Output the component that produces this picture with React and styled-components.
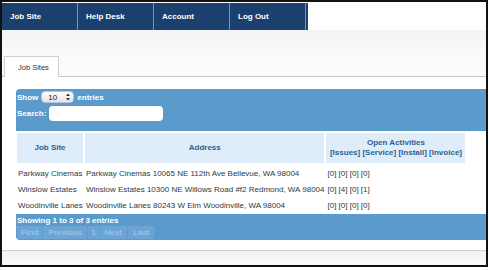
import React from 'react';
import styled, { createGlobalStyle } from 'styled-components';

const GlobalStyle = createGlobalStyle`
    body {
        margin: 0;
        background: #ffffff;
        font-family: "Liberation Sans", Arial, sans-serif;
    }
`;

const Frame = styled.div`
    width: 488px;
    height: 267px;
    border: 2px solid #111;
    box-sizing: border-box;
    background: #ffffff;
    display: flex;
    flex-direction: column;
    overflow: hidden;
`;

const Nav = styled.div`
    margin-top: 1px;
    height: 27px;
    width: 306px;
    background: #1b406d;
    display: flex;
    flex-shrink: 0;
`;

const NavItem = styled.div`
    width: 76px;
    box-sizing: border-box;
    border-right: 1px solid #7d93b3;
    padding-left: 8px;
    color: #ffffff;
    font-size: 8px;
    font-weight: bold;
    line-height: 27px;
`;

const Masthead = styled.div`
    height: 25px;
    flex-shrink: 0;
    background: linear-gradient(to bottom, #f3f3f3, #fbfbfb);
`;

const TabBar = styled.div`
    height: 21px;
    flex-shrink: 0;
    border-bottom: 1px solid #c9c9c9;
    display: flex;
    align-items: flex-end;
    background: #fbfbfb;
`;

const Tab = styled.div`
    margin-left: 2px;
    width: 55px;
    height: 21px;
    margin-bottom: -1px;
    box-sizing: border-box;
    border: 1px solid #cfcfcf;
    border-bottom: none;
    background: #ffffff;
    color: #333;
    font-size: 7.5px;
    line-height: 22px;
    padding-left: 13px;
`;

const Content = styled.div`
    flex: 1;
    padding: 12px 0 0 14px;
`;

const Panel = styled.div`
    background: #5b9bcb;
    color: #ffffff;
    font-size: 8px;
    font-weight: bold;
    display: flex;
    flex-direction: column;
    gap: ${(p) => p.$gap || 0}px;
    padding: ${(p) => p.$pad};
    height: ${(p) => p.$h}px;
    box-sizing: border-box;
    border-radius: ${(p) => p.$radius};
`;

const Line = styled.div`
    display: flex;
    align-items: center;
    gap: 3px;
`;

const Select = styled.div`
    width: 33px;
    height: 12px;
    box-sizing: border-box;
    border-radius: 4px;
    background: linear-gradient(to bottom, #ffffff, #e4e4e4);
    border: 1px solid #b5c7d8;
    color: #222;
    font-weight: normal;
    font-size: 8px;
    display: flex;
    align-items: center;
    justify-content: space-between;
    padding: 0 3px 0 6px;
`;

const SearchInput = styled.div`
    width: 114px;
    height: 15px;
    background: #ffffff;
    border-radius: 4px;
`;

const Table = styled.table`
    border-collapse: separate;
    border-spacing: 2px 2px;
    table-layout: fixed;
    margin: 0 0 1px -1px;
    font-size: 8px;
`;

const HeadCell = styled.th`
    width: ${(p) => p.$w}px;
    height: 30px;
    padding: 0;
    background: #deedf9;
    color: #2f5f8d;
    font-weight: bold;
    text-align: center;
    line-height: 10px;
    white-space: nowrap;
`;

const Cell = styled.td`
    height: 12px;
    padding: 2px 0 0 1px;
    color: #2c3a48;
    white-space: nowrap;
    overflow: visible;
`;

const Pager = styled.div`
    display: flex;
    align-self: flex-start;
    margin-top: 1px;
    border-radius: 0 0 4px 4px;
    overflow: hidden;
`;

const PageButton = styled.div`
    height: 13px;
    line-height: 13px;
    padding: 0 ${(p) => p.$px || 5}px;
    background: #6aa5d6;
    color: #9dc1e2;
    border-right: 1px solid #5d9ccd;
`;

const Bottom = styled.div`
    height: 14px;
    flex-shrink: 0;
    border-top: 1px solid #cfcfcf;
    background: linear-gradient(to bottom, #f2f2f2, #f9f9f9);
`;

const rows = [
    ['Parkway Cinemas', 'Parkway Cinemas 10065 NE 112th Ave Bellevue, WA 98004', '[0] [0] [0] [0]'],
    ['Winslow Estates', 'Winslow Estates 10300 NE Willows Road #f2 Redmond, WA 98004', '[0] [4] [0] [1]'],
    ['Woodinville Lanes', 'Woodinville Lanes 80243 W Elm Woodinville, WA 98004', '[0] [0] [0] [0]'],
];

const SelectArrows = () => (
    <svg width="4" height="8" viewBox="0 0 4 8">
        <path d="M2 0.5 L4 3 L0 3 Z M2 7.5 L4 5 L0 5 Z" fill="#333" />
    </svg>
);

const App = () => {
    return (
        <Frame>
            <GlobalStyle />
            <Nav>
                {['Job Site', 'Help Desk', 'Account', 'Log Out'].map((item) => (
                    <NavItem key={item}>{item}</NavItem>
                ))}
            </Nav>
            <Masthead />
            <TabBar>
                <Tab>Job Sites</Tab>
            </TabBar>
            <Content>
                <Panel $h={42} $pad="2px 0 0 1px" $gap={3} $radius="4px 0 0 0">
                    <Line>
                        Show
                        <Select>
                            10
                            <SelectArrows />
                        </Select>
                        entries
                    </Line>
                    <Line>
                        Search:
                        <SearchInput />
                    </Line>
                </Panel>
                <Table>
                    <thead>
                        <tr>
                            <HeadCell $w={66}>Job Site</HeadCell>
                            <HeadCell $w={232}>Address</HeadCell>
                            <HeadCell $w={139}>
                                Open Activities
                                <br />
                                [Issues] [Service] [Install] [Invoice]
                            </HeadCell>
                        </tr>
                    </thead>
                    <tbody>
                        {rows.map((row) => (
                            <tr key={row[0]}>
                                {row.map((value) => (
                                    <Cell key={value}>{value}</Cell>
                                ))}
                            </tr>
                        ))}
                    </tbody>
                </Table>
                <Panel $h={26} $pad="2px 0 0 1px" $gap={0} $radius="0 0 0 4px">
                    <div>Showing 1 to 3 of 3 entries</div>
                    <Pager>
                        <PageButton $px={4}>First</PageButton>
                        <PageButton>Previous</PageButton>
                        <PageButton $px={3}>1</PageButton>
                        <PageButton>Next</PageButton>
                        <PageButton $px={5}>Last</PageButton>
                    </Pager>
                </Panel>
            </Content>
            <Bottom />
        </Frame>
    );
};

export default App;
